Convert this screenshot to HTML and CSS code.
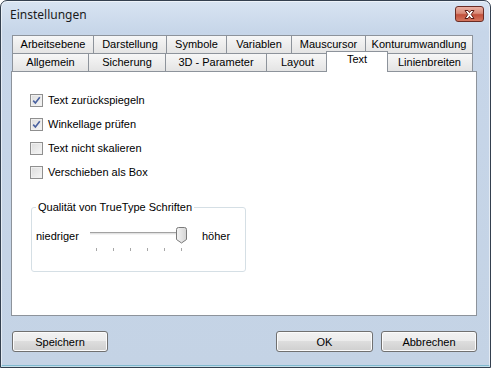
FILE: index.html
```html
<!DOCTYPE html>
<html>
<head>
	<meta charset="utf-8">
	<title>Einstellungen</title>
	<link rel="stylesheet" href="styles.css">
</head>
<body>
	<div class="window">
		<div class="titlebar">
			<span class="title">Einstellungen</span>
			<span class="close">
				<svg width="29" height="15" viewBox="0 0 29 15">
					<path d="M10 3.5 L13 3.5 L14.5 5.5 L16 3.5 L19 3.5 L16.2 7.5 L19 11.5 L16 11.5 L14.5 9.5 L13 11.5 L10 11.5 L12.8 7.5 Z" fill="#fff" stroke="#5a1a14" stroke-width="1"/>
				</svg>
			</span>
		</div>
		<div class="client">
			<div class="tabs">
				<div class="tabrow">
					<div class="tab">Arbeitsebene</div>
					<div class="tab">Darstellung</div>
					<div class="tab">Symbole</div>
					<div class="tab">Variablen</div>
					<div class="tab">Mauscursor</div>
					<div class="tab">Konturumwandlung</div>
				</div>
				<div class="tabrow">
					<div class="tab">Allgemein</div>
					<div class="tab">Sicherung</div>
					<div class="tab">3D - Parameter</div>
					<div class="tab">Layout</div>
					<div class="tab active">Text</div>
					<div class="tab">Linienbreiten</div>
				</div>
			</div>
			<div class="panel">
				<div class="checks">
					<label class="check"><span class="box"><svg width="11" height="11" viewBox="0 0 11 11"><path d="M2.2 5.6 L4.4 8 L8.8 2.2" fill="none" stroke="#4a62a0" stroke-width="1.6"/></svg></span>Text zurückspiegeln</label>
					<label class="check"><span class="box"><svg width="11" height="11" viewBox="0 0 11 11"><path d="M2.2 5.6 L4.4 8 L8.8 2.2" fill="none" stroke="#4a62a0" stroke-width="1.6"/></svg></span>Winkellage prüfen</label>
					<label class="check"><span class="box"></span>Text nicht skalieren</label>
					<label class="check"><span class="box"></span>Verschieben als Box</label>
				</div>
				<fieldset class="group">
					<legend>Qualität von TrueType Schriften</legend>
					<div class="sliderrow">
						<span class="lbl low">niedriger</span>
						<div class="slider">
							<div class="track"></div>
							<div class="ticks"><i></i><i></i><i></i><i></i><i></i><i></i></div>
							<svg class="thumb" width="11" height="17" viewBox="0 0 11 17">
								<defs>
									<linearGradient id="tg" x1="0" y1="0" x2="1" y2="0">
										<stop offset="0" stop-color="#f4f4f4"/>
										<stop offset="1" stop-color="#d4d4d4"/>
									</linearGradient>
								</defs>
								<path d="M0.5 2.5 Q0.5 0.5 2.5 0.5 H8.5 Q10.5 0.5 10.5 2.5 V12.5 L5.5 16 L0.5 12.5 Z" fill="url(#tg)" stroke="#7a7a7a"/>
							</svg>
						</div>
						<span class="lbl high">höher</span>
					</div>
				</fieldset>
			</div>
			<div class="buttons">
				<button>Speichern</button>
				<button class="ok">OK</button>
				<button>Abbrechen</button>
			</div>
		</div>
	</div>
</body>
</html>
```

FILE: styles.css
```css
body{
	margin: 0px;
	padding: 0px;
	background: #fff;
}

.window{
	width: 491px;
	height: 368px;
	box-sizing: border-box;
	border: 1px solid #34404f;
	border-radius: 7px 7px 0px 0px;
	background: linear-gradient(#d8e4f2 0px, #c7d6e9 30px, #c4d3e5 100%);
	box-shadow: inset 0px 0px 0px 1px rgba(255,255,255,0.55), inset 0px -2px 0px 0px #7fb9cf;
	display: flex;
	flex-direction: column;
	font-family: "Liberation Sans", Arial, sans-serif;
	font-size: 11px;
	color: #000;
	overflow: hidden;
}

.titlebar{
	height: 29px;
	flex: none;
	display: flex;
	justify-content: space-between;
	align-items: flex-start;
	padding: 0px 6px 0px 9px;
}

.title{
	font-family: "Noto Sans", "Liberation Sans", sans-serif;
	font-size: 12px;
	line-height: 14px;
	margin-top: 7px;
	color: #1b1b1b;
}

.close{
	margin-top: 5px;
	width: 29px;
	height: 16px;
	box-sizing: border-box;
	border: 1px solid #6a2c24;
	border-radius: 3px;
	background: linear-gradient(#eab0a2 0%, #d88a78 45%, #c2503c 55%, #d4765e 100%);
	display: flex;
	align-items: center;
	justify-content: center;
}

.close svg{
	display: block;
	margin: -1px;
}

.client{
	flex: 1;
	margin: 0px 7px 7px 6px;
	padding: 5px 6px 0px 5px;
	display: flex;
	flex-direction: column;
}

.tabs{
	display: flex;
	flex-direction: column;
	margin-right: 2px;
}

.tabrow{
	display: flex;
	height: 18px;
}

.tab{
	flex: none;
	box-sizing: border-box;
	height: 18px;
	line-height: 17px;
	text-align: center;
	border: 1px solid #8d939b;
	border-bottom: 0px;
	border-right: 0px;
	background: linear-gradient(#f7f7f7, #e4e4e4);
	white-space: nowrap;
}

.tab:last-child{
	border-right: 1px solid #8d939b;
}

.tabrow:nth-child(1) .tab:nth-child(1){ width: 81px; }
.tabrow:nth-child(1) .tab:nth-child(2){ width: 73px; }
.tabrow:nth-child(1) .tab:nth-child(3){ width: 60px; }
.tabrow:nth-child(1) .tab:nth-child(4){ width: 65px; }
.tabrow:nth-child(1) .tab:nth-child(5){ width: 74px; }
.tabrow:nth-child(1) .tab:nth-child(6){ width: 108px; }

.tabrow:nth-child(2) .tab:nth-child(1){ width: 76px; }
.tabrow:nth-child(2) .tab:nth-child(2){ width: 77px; }
.tabrow:nth-child(2) .tab:nth-child(3){ width: 101px; }
.tabrow:nth-child(2) .tab:nth-child(4){ width: 62px; }
.tabrow:nth-child(2) .tab:nth-child(5){ width: 62px; }
.tabrow:nth-child(2) .tab:nth-child(6){ width: 87px; }

.tab.active{
	position: relative;
	z-index: 1;
	height: 21px;
	margin: -2px -2px -1px -2px;
	line-height: 15px;
	background: #fff;
	border-right: 1px solid #8d939b;
}

.panel{
	margin-left: -1px;
	height: 245px;
	box-sizing: border-box;
	background: #fff;
	border: 1px solid #8d939b;
	padding: 22px 18px 0px 18px;
	display: flex;
	flex-direction: column;
	align-items: flex-start;
}

.checks{
	display: flex;
	flex-direction: column;
	gap: 11px;
}

.check{
	display: flex;
	align-items: center;
	height: 13px;
	line-height: 13px;
}

.box{
	width: 13px;
	height: 13px;
	box-sizing: border-box;
	border: 1px solid #8f8f8f;
	background: linear-gradient(135deg, #dcdcdc, #f6f6f6);
	box-shadow: inset 0px 0px 0px 1px #f0f0f0;
	margin-right: 5px;
	display: flex;
	align-items: center;
	justify-content: center;
}

.box svg{
	display: block;
}

.group{
	margin: 22px 0px 0px 1px;
	width: 215px;
	height: 71px;
	box-sizing: border-box;
	border: 1px solid #d5dfe5;
	border-radius: 3px;
	padding: 0px 4px;
}

.group legend{
	padding: 0px 2px;
	line-height: 13px;
}

.sliderrow{
	display: flex;
	align-items: flex-start;
	margin-top: 13px;
}

.lbl{
	margin-top: 3px;
	line-height: 13px;
}

.low{
	width: 54px;
}

.high{
	margin-left: 16px;
}

.slider{
	position: relative;
	width: 96px;
	height: 26px;
}

.track{
	margin-top: 5px;
	height: 3px;
	box-sizing: border-box;
	border-top: 1px solid #a2a2a2;
	border-bottom: 1px solid #f4f4f4;
	background: #e2e2e2;
	width: 95px;
}

.ticks{
	display: flex;
	gap: 16px;
	padding-left: 6px;
	margin-top: 13px;
}

.ticks i{
	display: block;
	width: 1px;
	height: 3px;
	background: #a7a7a7;
}

.thumb{
	position: absolute;
	left: 86px;
	top: 0px;
}

.buttons{
	display: flex;
	gap: 8px;
	margin-top: 15px;
}

button{
	font: inherit;
	color: #000;
	width: 96px;
	height: 21px;
	padding: 0px;
	border: 1px solid #707070;
	border-radius: 3px;
	background: linear-gradient(#f2f2f2 0%, #ebebeb 50%, #dddddd 50%, #cfcfcf 100%);
	box-shadow: inset 0px 0px 0px 1px #fbfbfb;
}

button.ok{
	margin-left: auto;
	width: 97px;
}
```
